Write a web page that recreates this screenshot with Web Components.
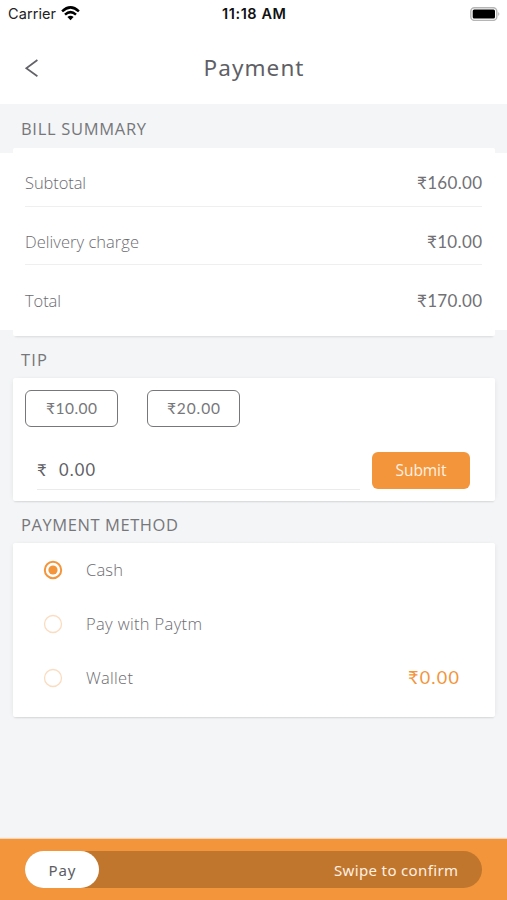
<!DOCTYPE html>
<html lang="en">
<head>
<meta charset="utf-8">
<title>Payment</title>
<style>
html,body{margin:0;height:900px;background:#f3f5f7;overflow:hidden}
body{font-family:"Open Sans","Noto Sans",sans-serif;color:#77777b}
</style>
</head>
<body>
<payment-screen></payment-screen>
<script>
const define = (name, html, init) => customElements.define(name, class extends HTMLElement {
  connectedCallback() {
    if (this.shadowRoot) return;
    const t = document.createElement('template');
    t.innerHTML = html;
    this.attachShadow({mode: 'open'}).append(t.content.cloneNode(true));
    if (init) init(this, this.shadowRoot);
  }
});

// A single line of text whose tracking is adjusted to fill the width in "w".
define('tracked-text', `<style>
:host{display:block;white-space:pre;flex:none;line-height:24px}
span{display:inline-block}
</style><span><slot></slot></span>`, (el, root) => {
  const w = +el.getAttribute('w');
  const s = root.querySelector('span');
  el.style.width = w + 'px';
  const n = [...el.textContent].length;
  s.style.letterSpacing = '0px';
  if (n > 1) s.style.letterSpacing = (w - s.getBoundingClientRect().width) / (n - 1) + 'px';
});

define('status-bar', `<style>
:host{display:grid;grid-template-columns:1fr auto 1fr;align-items:center;height:28px;padding:0 7px 0 8px;box-sizing:border-box;font-family:Inter,sans-serif;font-size:14.5px;color:#222}
.l{display:flex;align-items:center;gap:5px}
.time{font-weight:600;color:#111}
.battery{justify-self:end;display:block;margin-top:-1px}
.wifi{margin-top:-2px}
</style>
<div class="l"><tracked-text w="48">Carrier</tracked-text>
<svg class="wifi" width="19" height="15" viewBox="0 0 19 15"><g fill="none" stroke="#000" stroke-width="2.5"><path d="M1.1 5.3Q9.5-2.5 17.9 5.3"/><path d="M4 8.6Q9.5 3.6 15 8.6"/></g><path d="M6.4 11Q9.5 8.5 12.6 11L9.5 14.2Z"/></svg></div>
<tracked-text class="time" w="64">11:18 AM</tracked-text>
<svg class="battery" width="30" height="14" viewBox="0 0 30 14"><rect x=".8" y=".8" width="26" height="12.6" rx="3.6" fill="#fff" stroke="#b5b5b5" stroke-width="1.4"/><rect x="2.7" y="2.6" width="22.3" height="9" rx="1.5"/><path d="M28.3 5Q30.3 7 28.3 9Z" fill="#aaa"/></svg>`);

define('nav-header', `<style>
:host{display:grid;grid-template-columns:1fr auto 1fr;align-items:center;height:76px;padding:5px 0 0 24px;box-sizing:border-box}
svg{display:block}
tracked-text{font:400 22.5px/30px "Noto Sans",sans-serif;color:#5f5f66;margin:-1px 24px 0 0}
</style>
<svg width="16" height="20" viewBox="0 0 16 20"><path d="M13.4 2L2.3 10.3 13.4 18.2" transform="translate(0 -1)" fill="none" stroke="#626268" stroke-width="1.7"/></svg>
<tracked-text w="100">Payment</tracked-text>`);

define('section-title', `<style>
:host{display:flex;align-items:center;box-sizing:border-box;padding-left:21px;height:var(--h,42px);font-size:16.5px;color:#77777b}
</style><slot></slot>`);

define('surface-card', `<style>
:host{display:block;margin:0 12px 0 13px;background:#fff;border-radius:2px;box-sizing:border-box;box-shadow:0 2px 2px -1px #0000001c,2px 0 5px -2px #00000012,-2px 0 5px -2px #00000012}
:host([flat]){box-shadow:0 3px 2px -2px #0000001c}
</style><slot></slot>`);

define('bill-row', `<style>
:host{display:flex;justify-content:space-between;align-items:center;height:58.5px;box-sizing:border-box;padding-top:13px;border-bottom:1.5px solid #efeff0;font-size:16.5px}
:host([last]){border-bottom:0}
::slotted([slot=label]){font-weight:300;color:#6c6c71}
::slotted([slot=amount]){font-family:Lato,"Noto Sans",sans-serif;font-size:17px;color:#717176}
</style><slot name="label"></slot><slot name="amount"></slot>`);

define('tip-button', `<style>
:host{display:flex;align-items:center;justify-content:center;width:93px;height:37px;box-sizing:border-box;border:1.5px solid #77777b;border-radius:6px;padding-bottom:1px;font:15.5px Lato,"Noto Sans",sans-serif;color:#77777b}
</style><slot></slot>`);

define('submit-button', `<style>
:host{display:flex;align-items:center;justify-content:center;width:98px;height:37px;border-radius:6px;background:#f3953b;color:#fff1e2;font-size:15.5px;padding-bottom:1px;box-sizing:border-box}
</style><slot></slot>`);

define('amount-field', `<style>
:host{display:flex;gap:12px;align-items:center;width:323px;height:38px;padding-bottom:2px;box-sizing:border-box;border-bottom:1.5px solid #ebebec;font:16.5px Lato,"Noto Sans",sans-serif;color:#606065}
</style><slot></slot>`);

define('pay-option', `<style>
:host{display:grid;grid-template-columns:43px 1fr auto;align-items:center;height:54px;padding:0 36px 0 30px;box-sizing:border-box;font-size:16.5px;font-weight:300;color:#6c6c71}
svg{display:block}
.on{display:none}
:host([checked]) .on{display:inline}
:host([checked]) .off{display:none}
::slotted([slot=balance]){font:400 18px/24px Lato,"Noto Sans",sans-serif;color:#f3953b;margin-top:-2px}
</style>
<svg width="20" height="20" viewBox="0 0 20 20"><g class="off"><circle cx="10" cy="10" r="8.5" fill="none" stroke="#fbdcc0" stroke-width="1.3"/></g><g class="on"><circle cx="10" cy="10" r="8.2" fill="none" stroke="#f3953b" stroke-width="2"/><circle cx="10" cy="10" r="4.6" fill="#f3953b"/></g></svg>
<slot></slot><slot name="balance"></slot>`);

define('swipe-bar', `<style>
:host{display:block;height:61px;background:#f3953b;padding:12px 25px;box-sizing:border-box;box-shadow:0 -1px 1px #f3953b55}
.track{display:flex;justify-content:space-between;align-items:center;height:37px;border-radius:19px;background:#c1762d;padding-right:24px}
.thumb{display:flex;align-items:center;justify-content:center;width:74px;height:37px;border-radius:19px;background:#fff;color:#5d5d62}
tracked-text{font:400 15px/24px "Noto Sans",sans-serif}
.hint{color:#fff0e2}
</style>
<div class="track"><div class="thumb"><tracked-text w="27">Pay</tracked-text></div><tracked-text class="hint" w="124">Swipe to confirm</tracked-text></div>`);

define('payment-screen', `<style>
:host{display:flex;flex-direction:column;width:507px;height:900px;background:#f3f5f7}
.top{background:#fff;height:104px}
.bill{background:linear-gradient(#fff,#fff) 0 5px/100% 177px no-repeat}
.rows{padding:0 13px 0 12px;height:188px;box-sizing:border-box}
.tip{height:123px;padding:12px 25px 0 12px;box-sizing:border-box}
.choices{display:flex;gap:29px}
.entry{display:flex;justify-content:space-between;align-items:flex-start;margin-top:25px;padding-left:12px}
.methods{height:174px}
.spacer{flex:1}
</style>
<div class="top"><status-bar></status-bar><nav-header></nav-header></div>
<section-title style="--h:44px;padding-top:6px"><tracked-text w="125">BILL SUMMARY</tracked-text></section-title>
<div class="bill"><surface-card flat><div class="rows">
<bill-row><tracked-text slot="label" w="61">Subtotal</tracked-text><tracked-text slot="amount" w="65">₹160.00</tracked-text></bill-row>
<bill-row><tracked-text slot="label" w="114">Delivery charge</tracked-text><tracked-text slot="amount" w="55">₹10.00</tracked-text></bill-row>
<bill-row last><tracked-text slot="label" w="36">Total</tracked-text><tracked-text slot="amount" w="65">₹170.00</tracked-text></bill-row>
</div></surface-card></div>
<section-title style="padding-top:5px"><tracked-text w="26">TIP</tracked-text></section-title>
<surface-card><div class="tip">
<div class="choices"><tip-button><tracked-text w="51">₹10.00</tracked-text></tip-button><tip-button><tracked-text w="53">₹20.00</tracked-text></tip-button></div>
<div class="entry"><amount-field><tracked-text w="10">₹</tracked-text><tracked-text w="36">0.00</tracked-text></amount-field><submit-button><tracked-text w="51">Submit</tracked-text></submit-button></div>
</div></surface-card>
<section-title style="padding-top:5px"><tracked-text w="157">PAYMENT METHOD</tracked-text></section-title>
<surface-card><div class="methods">
<pay-option checked><tracked-text w="37">Cash</tracked-text></pay-option>
<pay-option><tracked-text w="116">Pay with Paytm</tracked-text></pay-option>
<pay-option><tracked-text w="47">Wallet</tracked-text><tracked-text slot="balance" w="51">₹0.00</tracked-text></pay-option>
</div></surface-card>
<div class="spacer"></div>
<swipe-bar></swipe-bar>`);
</script>
</body>
</html>
